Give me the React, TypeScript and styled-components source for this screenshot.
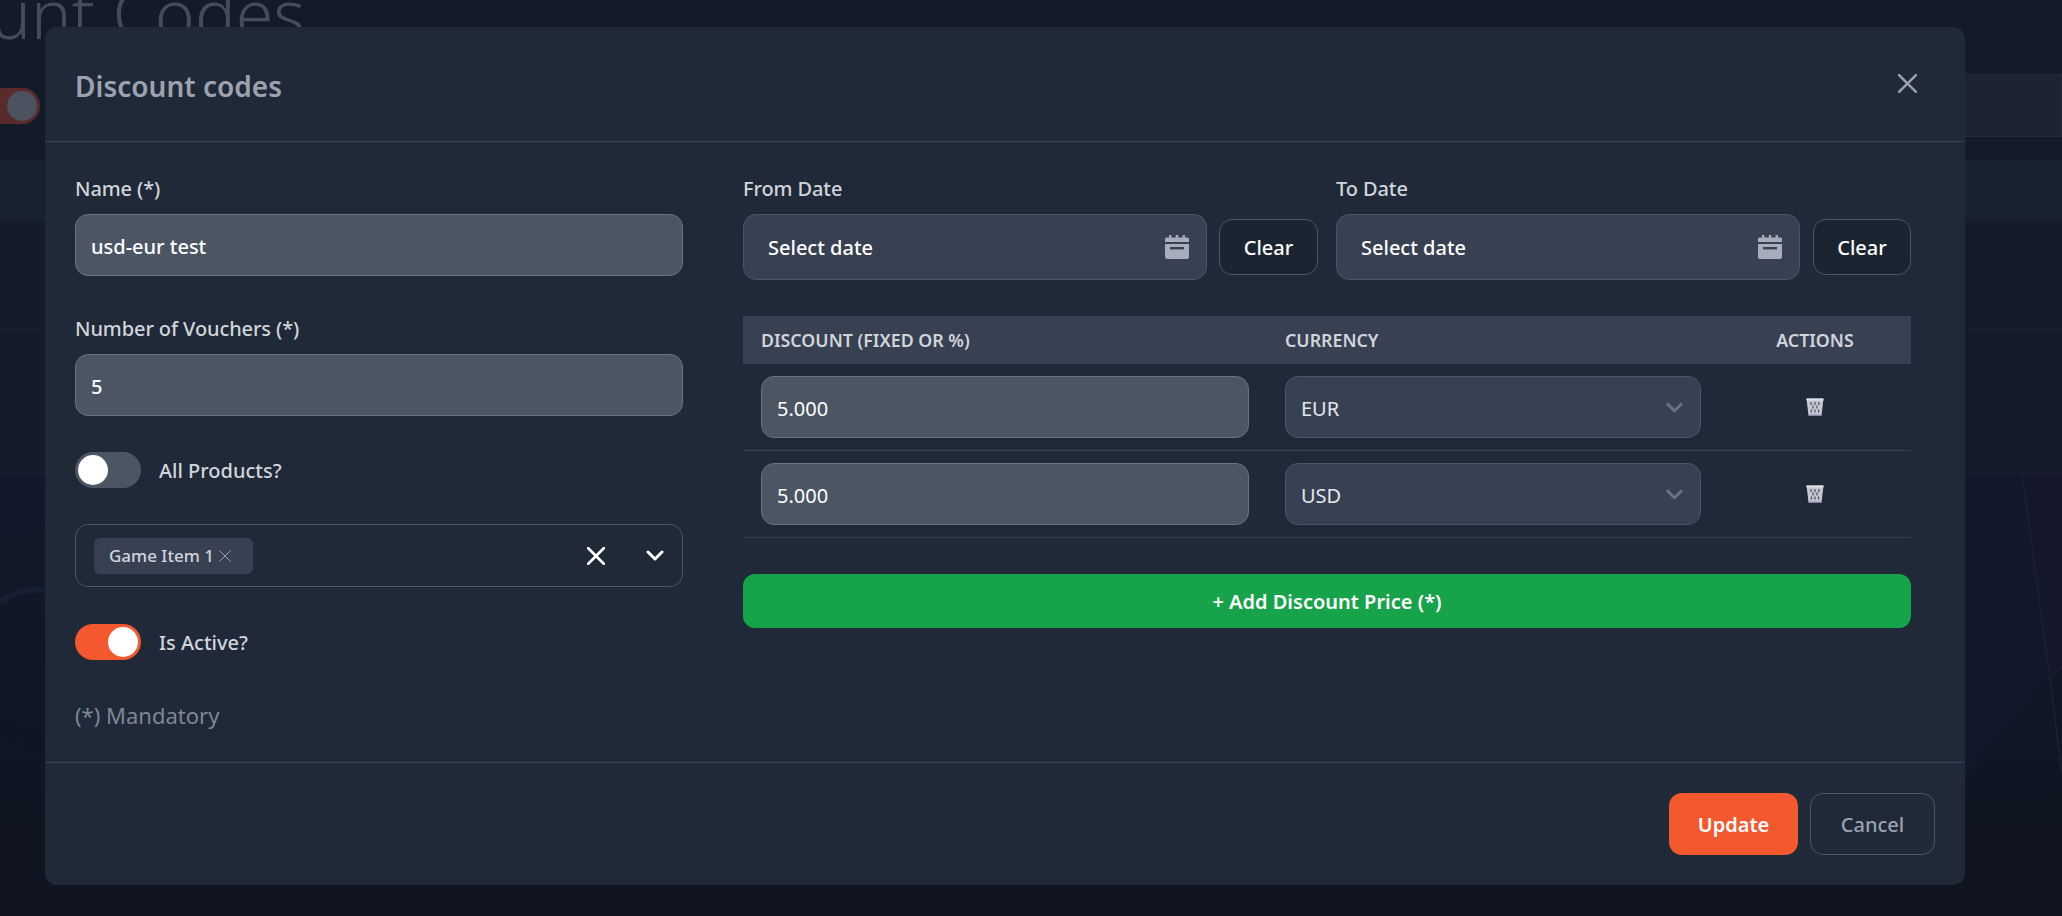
import React from 'react';
import styled, { createGlobalStyle } from 'styled-components';

const FONT = `"Noto Sans", "Open Sans", sans-serif`;

const Global = createGlobalStyle`
  html, body { margin: 0; padding: 0; height: 100%; background: #101623; }
  body { font-family: ${FONT}; overflow: hidden; }
  * { box-sizing: border-box; }
`;

const Page = styled.div`
  width: 2062px;
  height: 916px;
  overflow: hidden;
  position: relative;
  display: flex;
  flex-direction: column;
  background: #131a29;
`;

const PageTitle = styled.h1`
  flex: none;
  height: 84px;
  margin: -29px 0 0 -178px;
  font-size: 68px;
  line-height: 84px;
  font-weight: 300;
  color: #454c59;
  white-space: nowrap;
`;

const PageToolbar = styled.div`
  flex: none;
  height: 63px;
  margin-top: 19px;
  display: flex;
  align-items: center;
  justify-content: space-between;
`;

const PageToggle = styled.div`
  width: 66px;
  height: 36px;
  margin-left: -26px;
  border-radius: 18px;
  background: #5a2b2c;
  display: flex;
  justify-content: flex-end;
  align-items: center;
  padding-right: 3px;
`;

const PageKnob = styled.div`
  width: 30px;
  height: 30px;
  border-radius: 50%;
  background: #4b5260;
`;

const PageSearch = styled.div`
  width: 400px;
  height: 63px;
  background: #1c2431;
  border: 1px solid #232b38;
`;

const PageTableHead = styled.div`
  flex: none;
  height: 61px;
  margin-top: 23px;
  background: #182130;
`;

const PageRow = styled.div<{ $height: number }>`
  flex: none;
  height: ${(p) => p.$height}px;
  background: #141c2a;
  border-bottom: 1px solid #1a2230;
`;

const PageArt = styled.svg`
  flex: 1;
  display: block;
  width: 2062px;
  min-height: 0;
`;

const Overlay = styled.div`
  position: absolute;
  inset: 0;
`;

const Modal = styled.section`
  position: absolute;
  left: 45px;
  top: 27px;
  width: 1920px;
  height: 858px;
  background: #1f2937;
  border-radius: 12px;
  display: flex;
  flex-direction: column;
`;

const Header = styled.header`
  height: 115px;
  flex: none;
  padding: 0 48px 0 30px;
  border-bottom: 1px solid #374151;
  display: flex;
  align-items: center;
  justify-content: space-between;
`;

const Title = styled.h3`
  margin: 3px 0 0;
  font-size: 28px;
  line-height: 40px;
  font-weight: 600;
  color: #9ca3af;
`;

const CloseButton = styled.button`
  padding: 0;
  border: 0;
  background: none;
  color: #9ca3af;
  display: flex;
  margin-bottom: 1px;
`;

const Body = styled.div`
  flex: 1;
  padding: 33px 54px 0 30px;
  display: grid;
  grid-template-columns: 608px 1168px;
  column-gap: 60px;
  align-items: start;
`;

const LeftColumn = styled.div`
  display: flex;
  flex-direction: column;
`;

const Label = styled.label`
  display: block;
  font-size: 20px;
  line-height: 28px;
  font-weight: 500;
  letter-spacing: -0.1px;
  color: #d1d5db;
  margin-bottom: 11px;
`;

const Field = styled.div<{ $gap: number }>`
  margin-bottom: ${(p) => p.$gap}px;
`;

const TextInput = styled.div`
  height: 62px;
  border: 1px solid #6b7280;
  border-radius: 13px;
  background: #4b5563;
  padding: 2px 15px 0;
  display: flex;
  align-items: center;
  font-size: 20px;
  color: #fff;
  font-weight: 500;
`;

const ToggleRow = styled.div`
  display: flex;
  align-items: center;
  gap: 18px;
`;

const ToggleTrack = styled.div<{ $on?: boolean }>`
  width: 66px;
  height: 36px;
  border-radius: 18px;
  background: ${(p) => (p.$on ? '#f4582e' : '#4b5563')};
  display: flex;
  align-items: center;
  justify-content: ${(p) => (p.$on ? 'flex-end' : 'flex-start')};
  padding: 0 3px;
`;

const ToggleKnob = styled.div`
  width: 30px;
  height: 30px;
  border-radius: 50%;
  background: #fff;
`;

const ToggleLabel = styled.span`
  padding-top: 2px;
  font-size: 20px;
  line-height: 28px;
  font-weight: 500;
  color: #d1d5db;
`;

const MultiSelect = styled.div`
  height: 63px;
  margin: 36px 0 37px;
  border: 1px solid #4b5563;
  border-radius: 13px;
  padding: 0 18px;
  display: flex;
  align-items: center;
`;

const Chip = styled.div`
  width: 159px;
  height: 36px;
  border-radius: 6px;
  background: #374151;
  display: flex;
  align-items: center;
  padding-left: 15px;
  gap: 5px;
  font-size: 17px;
  font-weight: 500;
  color: #d1d5db;
  svg { color: #9ca3af; }
`;

const SelectIcons = styled.div`
  margin-left: auto;
  display: flex;
  align-items: center;
  gap: 41px;
  color: #fff;
`;

const Mandatory = styled.p`
  margin: 39px 0 0;
  font-size: 22px;
  line-height: 32px;
  color: #7e8794;
`;

const RightColumn = styled.div`
  display: flex;
  flex-direction: column;
`;

const DateRow = styled.div`
  display: grid;
  grid-template-columns: 575px 575px;
  column-gap: 18px;
`;

const DateControls = styled.div<{ $gap: number }>`
  display: flex;
  align-items: center;
  gap: ${(p) => p.$gap}px;
`;

const DateInput = styled.div`
  width: 464px;
  flex: none;
  height: 66px;
  border: 1px solid #4b5563;
  border-radius: 13px;
  background: #374151;
  padding: 0 17px 0 24px;
  display: flex;
  align-items: center;
  justify-content: space-between;
  font-size: 20px;
  font-weight: 500;
  color: #fff;
`;

const ClearButton = styled.button`
  flex: 1;
  height: 56px;
  border: 1px solid #4b5563;
  border-radius: 13px;
  background: #1b2431;
  color: #fff;
  font-family: inherit;
  font-size: 20px;
  font-weight: 500;
`;

const Table = styled.div`
  margin-top: 36px;
`;

const TableHead = styled.div`
  height: 48px;
  background: #374151;
  display: grid;
  grid-template-columns: 524px 1fr 174px;
  padding: 0 0 0 18px;
  align-items: center;
  font-size: 17.8px;
  font-weight: 600;
  text-transform: uppercase;
  color: #d1d5db;
`;

const HeadCenter = styled.span`
  text-align: center;
  padding-right: 18px;
`;

const TableRow = styled.div`
  height: 87px;
  border-bottom: 1px solid #374151;
  display: grid;
  grid-template-columns: 524px 1fr 174px;
  padding: 0 0 0 18px;
  align-items: center;
`;

const AmountInput = styled(TextInput)`
  width: 488px;
  font-weight: 400;
`;

const CurrencySelect = styled.div`
  width: 416px;
  height: 62px;
  border: 1px solid #4b5563;
  border-radius: 13px;
  background: #374151;
  padding: 2px 17px 0 15px;
  display: flex;
  align-items: center;
  justify-content: space-between;
  font-size: 20px;
  color: #e5e7eb;
  svg { color: #6b7280; margin-top: -2px; }
`;

const TrashCell = styled.div`
  display: flex;
  justify-content: center;
  padding-right: 18px;
`;

const AddButton = styled.button`
  margin-top: 36px;
  height: 54px;
  border: 0;
  border-radius: 12px;
  background: #16a34a;
  color: #fff;
  font-family: inherit;
  font-size: 20px;
  font-weight: 600;
`;

const Footer = styled.footer`
  height: 123px;
  flex: none;
  border-top: 1px solid #374151;
  padding: 30px 30px 0 0;
  display: flex;
  justify-content: flex-end;
  gap: 12px;
`;

const UpdateButton = styled.button`
  width: 129px;
  height: 62px;
  border: 0;
  border-radius: 13px;
  padding-top: 2px;
  background: #f4582e;
  color: #fff;
  font-family: inherit;
  font-size: 20px;
  font-weight: 600;
`;

const CancelButton = styled.button`
  width: 125px;
  height: 62px;
  border: 1px solid #4b5563;
  border-radius: 13px;
  padding-top: 2px;
  background: transparent;
  color: #9ca3af;
  font-family: inherit;
  font-size: 20px;
  font-weight: 500;
`;

const CrossIcon = ({ size, weight }: { size: number; weight: number }) => (
  <svg width={size} height={size} viewBox="0 0 18 18" fill="none" stroke="currentColor" strokeWidth={weight} strokeLinecap="round">
    <path d="M1 1 17 17M17 1 1 17" />
  </svg>
);

const ChevronIcon = ({ width, height, weight }: { width: number; height: number; weight: number }) => (
  <svg width={width} height={height} viewBox="0 0 18 11" fill="none" stroke="currentColor" strokeWidth={weight} strokeLinecap="round" strokeLinejoin="round">
    <path d="M2 2 9 9 16 2" />
  </svg>
);

const CalendarIcon = () => (
  <svg width="24" height="24" viewBox="0 0 24 24" fill="#a6adbb">
    <rect x="4" y="0" width="2.4" height="4" />
    <rect x="10.8" y="0" width="2.4" height="4" />
    <rect x="17.6" y="0" width="2.4" height="4" />
    <path d="M1.5 2.5h21A1.5 1.5 0 0 1 24 4v3H0V4a1.5 1.5 0 0 1 1.5-1.500Z" />
    <path d="M0 9h24v13a2 2 0 0 1-2 2H2a2 2 0 0 1-2-2Z" />
    <rect x="5" y="12" width="14" height="2.4" fill="#374151" />
  </svg>
);

const TrashIcon = () => (
  <svg width="18" height="18" viewBox="0 0 18 18">
    <path d="M0.500 0.500h17L15.500 17.500h-13Z" fill="#c6c6d0" />
    <rect x="0.500" y="0.500" width="17" height="2" fill="#dedee6" />
    <rect x="2.500" y="16.500" width="13" height="1.500" fill="#8d86a8" />
    <g fill="#4a4f5e">
      <rect x="4.500" y="4" width="1.200" height="3" /><rect x="8.400" y="4" width="1.200" height="3" /><rect x="12.300" y="4" width="1.200" height="3" />
      <rect x="6.400" y="7.500" width="1.200" height="3" /><rect x="10.400" y="7.500" width="1.200" height="3" />
      <rect x="4.800" y="11.500" width="1.200" height="3" /><rect x="8.400" y="11.500" width="1.200" height="3" /><rect x="12" y="11.500" width="1.200" height="3" />
    </g>
  </svg>
);

const Currency = ({ code }: { code: string }) => (
  <TableRow>
    <AmountInput>5.000</AmountInput>
    <CurrencySelect>
      {code}
      <ChevronIcon width={17} height={11} weight={3.2} />
    </CurrencySelect>
    <TrashCell>
      <TrashIcon />
    </TrashCell>
  </TableRow>
);

const DateField = ({ label, gap }: { label: string; gap: number }) => (
  <div>
    <Label>{label}</Label>
    <DateControls $gap={gap}>
      <DateInput>
        Select date
        <CalendarIcon />
      </DateInput>
      <ClearButton>Clear</ClearButton>
    </DateControls>
  </div>
);

export default function App() {
  return (
    <Page>
      <Global />
      <PageTitle>Discount Codes</PageTitle>
      <PageToolbar>
        <PageToggle>
          <PageKnob />
        </PageToggle>
        <PageSearch />
      </PageToolbar>
      <PageTableHead />
      <PageRow $height={108} />
      <PageRow $height={145} />
      <PageArt viewBox="0 0 2062 441" preserveAspectRatio="none">
        <defs>
          <linearGradient id="artBase" x1="0" y1="0" x2="0" y2="1">
            <stop offset="0" stopColor="#11192a" />
            <stop offset="1" stopColor="#0f141f" />
          </linearGradient>
        </defs>
        <rect width="2062" height="441" fill="url(#artBase)" />
        <path d="M2022 0H2062V190L2050 204Z" fill="#15162a" />
        <path d="M1965 0H2022L2050 204L1965 300Z" fill="#10182a" />
        <path d="M2022 0 2050 204 2062 300M2050 204 2062 192" fill="none" stroke="#1b2435" strokeWidth="1.200" />
        <path d="M0 128C14 116 30 114 45 116" fill="none" stroke="#162030" strokeWidth="6" />
        <path d="M0 250C16 254 32 262 45 272" fill="none" stroke="#0e1624" strokeWidth="14" />
      </PageArt>
      <Overlay>
        <Modal>
          <Header>
            <Title>Discount codes</Title>
            <CloseButton>
              <CrossIcon size={19} weight={2.3} />
            </CloseButton>
          </Header>
          <Body>
            <LeftColumn>
              <Field $gap={39}>
                <Label>Name (*)</Label>
                <TextInput>usd-eur test</TextInput>
              </Field>
              <Field $gap={36}>
                <Label>Number of Vouchers (*)</Label>
                <TextInput>5</TextInput>
              </Field>
              <ToggleRow>
                <ToggleTrack>
                  <ToggleKnob />
                </ToggleTrack>
                <ToggleLabel>All Products?</ToggleLabel>
              </ToggleRow>
              <MultiSelect>
                <Chip>
                  Game Item 1
                  <CrossIcon size={12} weight={1.5} />
                </Chip>
                <SelectIcons>
                  <CrossIcon size={18} weight={2.6} />
                  <ChevronIcon width={18} height={11} weight={3} />
                </SelectIcons>
              </MultiSelect>
              <ToggleRow>
                <ToggleTrack $on>
                  <ToggleKnob />
                </ToggleTrack>
                <ToggleLabel>Is Active?</ToggleLabel>
              </ToggleRow>
              <Mandatory>(*) Mandatory</Mandatory>
            </LeftColumn>
            <RightColumn>
              <DateRow>
                <DateField label="From Date" gap={12} />
                <DateField label="To Date" gap={13} />
              </DateRow>
              <Table>
                <TableHead>
                  <span>Discount (fixed or %)</span>
                  <span>Currency</span>
                  <HeadCenter>Actions</HeadCenter>
                </TableHead>
                <Currency code="EUR" />
                <Currency code="USD" />
              </Table>
              <AddButton>+ Add Discount Price (*)</AddButton>
            </RightColumn>
          </Body>
          <Footer>
            <UpdateButton>Update</UpdateButton>
            <CancelButton>Cancel</CancelButton>
          </Footer>
        </Modal>
      </Overlay>
    </Page>
  );
}
